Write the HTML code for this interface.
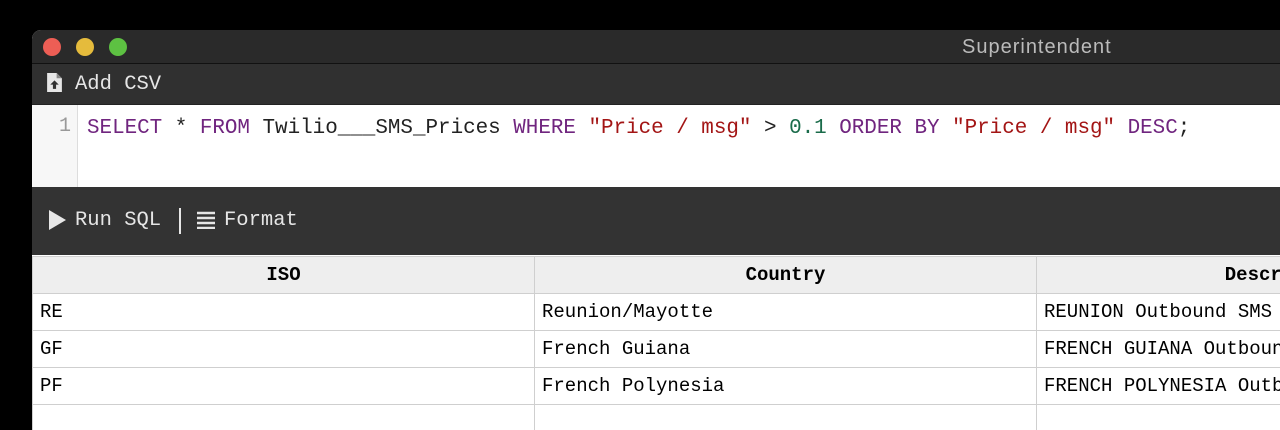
<!DOCTYPE html>
<html><head><style>
*{margin:0;padding:0;box-sizing:border-box}
body{width:1280px;height:412px;background:#000;position:relative;overflow:hidden;font-family:"Liberation Mono",monospace}
.win{position:absolute;left:32px;top:30px;width:1260px;height:400px;border-radius:9px 0 0 0;overflow:hidden;background:#fff}
.title{height:34px;background:#2a2a2a;border-bottom:1px solid #111;position:relative}
.dot{position:absolute;top:8px;width:18px;height:18px;border-radius:50%}
.title .t{position:absolute;left:930px;top:6px;color:#bbb;font:20px "Liberation Sans",sans-serif;letter-spacing:1px}
.tb1{height:41px;background:#303030;color:#e6e6e6;font-size:20.5px;line-height:41px;padding-left:15px;border-bottom:1px solid #222;white-space:nowrap}
.ed{height:82px;position:relative;background:#fff}
.gut{position:absolute;left:0;top:0;width:46px;height:82px;background:#f7f7f7;border-right:1px solid #ddd;color:#999;font-size:20px;text-align:right;padding-right:6px;line-height:44px}
.code{position:absolute;left:55px;top:4px;line-height:40px;font-size:20.9px;color:#222;white-space:pre}
.k{color:#70257f}.s{color:#a31515}.n{color:#1a6b4a}
.tb2{height:68px;background:#333;color:#e6e6e6;font-size:20.5px;line-height:68px;padding-left:14px;white-space:pre;position:relative}
table{border-collapse:collapse;font-size:19px;position:absolute;left:0;top:226px;table-layout:fixed;width:1506px}
td,th{border:1px solid #cfcfcf;height:37px;padding:0 7px;text-align:left;font-weight:normal;width:502px;white-space:nowrap;overflow:hidden}
th{background:#eee;text-align:center;font-weight:bold}
</style></head><body>
<div class="win">
<div class="title">
<div class="dot" style="left:11px;background:#ed5e55"></div>
<div class="dot" style="left:44px;background:#e5bb3c"></div>
<div class="dot" style="left:77px;background:#5dc142"></div>
<div class="t">Superintendent</div>
</div>
<div class="tb1"><svg width="15" height="19" viewBox="0 0 14 18" style="vertical-align:-3px;margin-right:13px"><path d="M0 0H9L14 5V18H0Z" fill="#e6e6e6"/><path d="M9 0V5H14" fill="#888"/><path d="M7 7L3 11H5.5V15H8.5V11H11Z" fill="#303030"/></svg>Add CSV</div>
<div class="ed"><div class="gut">1</div>
<div class="code"><span class="k">SELECT</span> * <span class="k">FROM</span> Twilio___SMS_Prices <span class="k">WHERE</span> <span class="s">"Price / msg"</span> &gt; <span class="n">0.1</span> <span class="k">ORDER BY</span> <span class="s">"Price / msg"</span> <span class="k">DESC</span>;</div></div>
<div class="tb2"><svg width="20" height="22" viewBox="0 0 20 22" style="position:absolute;left:15px;top:22px"><path d="M2 1L19 11L2 21Z" fill="#e6e6e6"/></svg><span style="position:absolute;left:43px;top:0">Run SQL</span><span style="position:absolute;left:147px;top:21px;width:2px;height:26px;background:#e6e6e6"></span><svg width="20" height="18" viewBox="0 0 20 18" style="position:absolute;left:164px;top:24px"><path d="M1 2H19M1 7H19M1 12H19M1 17H19" stroke="#e6e6e6" stroke-width="2.4"/></svg><span style="position:absolute;left:192px;top:0">Format</span></div>
<table>
<tr><th>ISO</th><th>Country</th><th>Description</th></tr>
<tr><td>RE</td><td>Reunion/Mayotte</td><td>REUNION Outbound SMS</td></tr>
<tr><td>GF</td><td>French Guiana</td><td>FRENCH GUIANA Outbound SMS</td></tr>
<tr><td>PF</td><td>French Polynesia</td><td>FRENCH POLYNESIA Outbound SMS</td></tr>
<tr><td>&nbsp;</td><td></td><td></td></tr>
</table>
</div>
</body></html>
